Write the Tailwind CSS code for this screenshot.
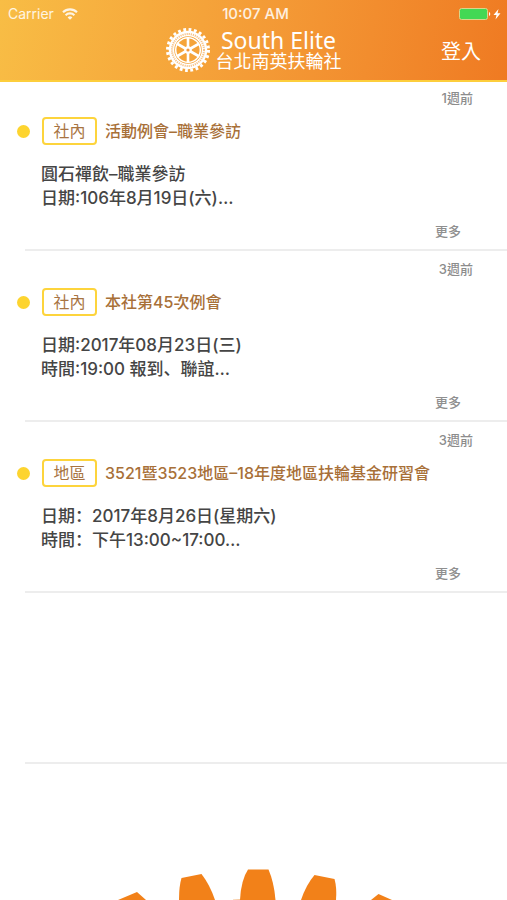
<!DOCTYPE html>
<html lang="zh-Hant">
<head>
<meta charset="utf-8">
<meta name="viewport" content="width=device-width, initial-scale=1">
<title>South Elite 台北南英扶輪社</title>
<script src="https://cdn.jsdelivr.net/npm/@tailwindcss/browser@4"></script>
</head>
<body class="flex min-h-screen flex-col bg-white font-['Inter','Noto_Sans_CJK_SC',sans-serif] text-[#454545]">
<header class="border-b-2 border-[#fdce3c] bg-linear-100 from-[#f8bd45] via-[#f49c37] to-[#ef7a22] text-white">
  <div class="grid h-7 grid-cols-3 items-center pr-1 pl-2 text-white/85">
    <div class="flex items-center gap-2 text-sm">
      <span>Carrier</span>
      <svg class="h-3 w-4" viewBox="0 0 16 12" fill="none" stroke="currentColor" stroke-width="2.100" aria-label="Wi-Fi"><path d="M1 4.200a10 10 0 0 1 14 0M3.600 7.200a6.300 6.300 0 0 1 8.800 0"/><path d="M8 11.800 5.600 9.400a3.400 3.400 0 0 1 4.800 0Z" fill="currentColor" stroke="none"/></svg>
    </div>
    <time class="text-center text-[15px] leading-5 font-medium">10:07 AM</time>
    <svg class="h-3 w-11 justify-self-end" viewBox="0 0 44 12" aria-label="電池充電中"><rect x=".5" y=".5" width="28" height="11" rx="2" fill="#43d854" stroke="#d8d58c"/><path d="M30 4a2.200 2.200 0 0 1 0 4Z" fill="#fff"/><path d="M39.500 1 34.500 7h3l-1 4.500 5-6.200h-3Z" fill="#fff"/></svg>
  </div>
  <div class="grid h-13 grid-cols-[1fr_auto_1fr] items-start">
    <a href="#" class="col-start-2 flex items-center gap-1.5">
      <svg class="size-11" viewBox="-22 -22 44 44" fill="none" stroke="#fff" aria-hidden="true">
        <circle r="20.500" stroke-width="3" stroke-dasharray="2.800 2.567"/>
        <circle r="16.500" stroke-width="5.500"/>
        <circle r="16" stroke="#f3a348" stroke-width="2" stroke-dasharray="1.200 .9" stroke-opacity=".65"/>
        <circle r="12.300" stroke-width="1.500"/>
        <g stroke-width="2.600"><path d="M0-13V13M-11.300-6.500 11.300 6.500M-11.300 6.500 11.300-6.500"/></g>
        <circle r="3.800" fill="#fff" stroke="none"/>
        <circle r="1.600" fill="#f3993b" stroke="none"/>
      </svg>
      <span class="flex flex-col items-center">
        <span class="font-['Noto_Sans',sans-serif] text-[23px] leading-6">South Elite</span>
        <span class="text-lg leading-5">台北南英扶輪社</span>
      </span>
    </a>
    <button type="button" class="mr-[26px] justify-self-end pt-2 text-xl leading-8">登入</button>
  </div>
</header>
<main>
  <ul>
    <li>
      <article class="ml-[25px] flex h-[169px] flex-col border-b-2 border-[#ededed]">
        <time class="mr-[34px] pt-1.5 text-right text-[13px] leading-5 font-medium text-[#8c8c8c]">1週前</time>
        <div class="-ml-2 mt-[9px] flex items-center gap-2">
          <span class="mr-1 size-[13px] rounded-full bg-[#fdd42f]"></span>
          <span class="flex h-7 w-[55px] items-center justify-center rounded-sm border-2 border-[#fdd43c] text-base text-[#a87442]">社內</span>
          <h2 class="text-base font-medium text-[#a87038]">活動例會–職業參訪</h2>
        </div>
        <p class="mt-[17px] ml-4 text-[17px] leading-6 font-medium">圓石禪飲–職業參訪<br>日期:106年8月19日(六)…</p>
        <a href="#" class="mt-auto mr-[46px] mb-2 self-end text-[13px] leading-5 font-medium text-[#8f8f8f]">更多</a>
      </article>
    </li>
    <li>
      <article class="ml-[25px] flex h-[171px] flex-col border-b-2 border-[#ededed]">
        <time class="mr-[34px] pt-2 text-right text-[13px] leading-5 font-medium text-[#8c8c8c]">3週前</time>
        <div class="-ml-2 mt-[9px] flex items-center gap-2">
          <span class="mr-1 size-[13px] rounded-full bg-[#fdd42f]"></span>
          <span class="flex h-7 w-[55px] items-center justify-center rounded-sm border-2 border-[#fdd43c] text-base text-[#a87442]">社內</span>
          <h2 class="text-base font-medium text-[#a87038]">本社第45次例會</h2>
        </div>
        <p class="mt-[17px] ml-4 text-[17px] leading-6 font-medium">日期:2017年08月23日(三)<br>時間:19:00 報到<span lang="zh-Hans">、</span>聯誼…</p>
        <a href="#" class="mt-auto mr-[46px] mb-2 self-end text-[13px] leading-5 font-medium text-[#8f8f8f]">更多</a>
      </article>
    </li>
    <li>
      <article class="ml-[25px] flex h-[171px] flex-col border-b-2 border-[#ededed]">
        <time class="mr-[34px] pt-2 text-right text-[13px] leading-5 font-medium text-[#8c8c8c]">3週前</time>
        <div class="-ml-2 mt-[9px] flex items-center gap-2">
          <span class="mr-1 size-[13px] rounded-full bg-[#fdd42f]"></span>
          <span class="flex h-7 w-[55px] items-center justify-center rounded-sm border-2 border-[#fdd43c] text-base text-[#a87442]">地區</span>
          <h2 class="text-base font-medium text-[#a87038]">3521暨3523地區–18年度地區扶輪基金研習會</h2>
        </div>
        <p class="mt-[17px] ml-4 text-[17px] leading-6 font-medium" lang="zh-Hans">日期：2017年8月26日(星期六)<br>時間：下午13:00~17:00…</p>
        <a href="#" class="mt-auto mr-[46px] mb-2 self-end text-[13px] leading-5 font-medium text-[#8f8f8f]">更多</a>
      </article>
    </li>
    <li class="ml-[25px] h-[171px] border-b-2 border-[#ededed]" aria-hidden="true"></li>
  </ul>
</main>
<footer class="mt-auto">
  <svg class="block w-full" viewBox="0 0 507 32" fill="#f28119" aria-hidden="true">
    <path d="M118 32 137 24 146 32Z"/>
    <path d="M179 32Q179 18 181.500 10L201.500 6Q210 17 215 32Z"/>
    <path d="M240 32Q241 12 248 1.500H268.500Q274 14 275.500 32Z"/>
    <path d="M301 32Q306 17 314.500 7L334.500 11Q337 20 336 32Z"/>
    <path d="M371 32 378.500 26 392 32Z"/>
    <path d="M233 31.500 240 31V32H233Z" fill="#f7c79a"/>
  </svg>
</footer>
</body>
</html>
